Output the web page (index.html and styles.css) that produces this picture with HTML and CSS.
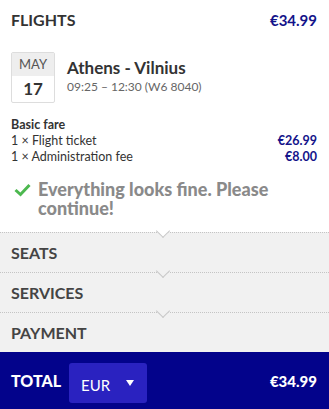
FILE: index.html
```html
<!DOCTYPE html>
<html>
<head>
<meta charset="utf-8">
<link rel="stylesheet" href="styles.css">
</head>
<body>
<div class="page">
  <section class="flights">
    <div class="head">
      <h2 class="title">FLIGHTS</h2>
      <span class="price">€34.99</span>
    </div>
    <div class="trip">
      <div class="date">
        <div class="month">MAY</div>
        <div class="day">17</div>
      </div>
      <div class="route">
        <div class="cities">Athens - Vilnius</div>
        <div class="time">09:25 – 12:30 (W6 8040)</div>
      </div>
    </div>
    <div class="fare">
      <div class="fare-name">Basic fare</div>
      <div class="line"><span>1 × Flight ticket</span><span class="amt">€26.99</span></div>
      <div class="line"><span>1 × Administration fee</span><span class="amt">€8.00</span></div>
    </div>
    <div class="status">
      <svg class="check" width="17" height="14" viewBox="0 0 17 14"><path d="M1.5 7 L6.5 11.5 L15.5 2" fill="none" stroke="#4cb84f" stroke-width="3"/></svg>
      <span>Everything looks fine. Please continue!</span>
    </div>
  </section>
  <div class="row first">SEATS</div>
  <div class="row">SERVICES</div>
  <div class="row">PAYMENT</div>
  <footer class="total">
    <span class="total-label">TOTAL</span>
    <div class="currency"><span>EUR</span><span class="caret"></span></div>
    <span class="total-price">€34.99</span>
  </footer>
</div>
</body>
</html>
```

FILE: styles.css
```css
html, body {
  margin: 0;
  padding: 0;
  background: #fff;
}
body {
  font-family: "Lato", "Open Sans", sans-serif;
  color: #333;
}
.page {
  width: 329px;
  height: 409px;
  display: flex;
  flex-direction: column;
  overflow: hidden;
}
.flights {
  padding: 0 12px 0 11px;
  height: 232px;
  box-sizing: border-box;
}
.head {
  display: flex;
  justify-content: space-between;
  align-items: center;
  height: 39px;
}
.title {
  margin: 0;
  font-size: 16px;
  font-weight: 700;
  color: #333;
}
.price {
  font-size: 15px;
  font-weight: 700;
  color: #13138a;
}
.trip {
  display: flex;
  align-items: center;
  margin-top: 13px;
  gap: 12px;
}
.date {
  width: 44px;
  height: 51px;
  box-sizing: border-box;
  border: 1px solid #ddd;
  border-radius: 2px;
  display: flex;
  flex-direction: column;
  text-align: center;
}
.month {
  background: #eee;
  height: 23px;
  line-height: 23px;
  font-size: 13px;
  color: #555;
}
.day {
  flex: 1;
  line-height: 26px;
  font-size: 17px;
  font-weight: 700;
  color: #333;
}
.route {
  margin-top: -4px;
}
.cities {
  font-size: 17px;
  font-weight: 700;
  color: #333;
  line-height: 22px;
}
.time {
  font-size: 12px;
  color: #666;
  line-height: 16px;
}
.fare {
  margin-top: 14px;
  font-size: 12.5px;
  line-height: 16px;
  color: #333;
}
.fare-name {
  font-weight: 700;
}
.line {
  display: flex;
  justify-content: space-between;
}
.amt {
  color: #13138a;
  font-weight: 700;
}
.status {
  display: flex;
  align-items: flex-start;
  margin-top: 15px;
  gap: 7px;
  padding-left: 3px;
  font-size: 18px;
  font-weight: 900;
  line-height: 19px;
  color: #8a8a8a;
}
.check {
  flex: none;
  margin-top: 3px;
}
.row {
  position: relative;
  height: 39px;
  line-height: 39px;
  padding-left: 11px;
  background: #f1f1f1;
  border-top: 1px dotted #c4c4c4;
  font-size: 16px;
  font-weight: 700;
  color: #444;
}
.row::before {
  content: "";
  position: absolute;
  left: 158px;
  top: -7px;
  width: 9px;
  height: 9px;
  background: #f1f1f1;
  border-right: 1px solid #c8c8c8;
  border-bottom: 1px solid #c8c8c8;
  transform: rotate(45deg);
}
.row.first::before {
  background: #fff;
}
.total {
  flex: 1;
  background: #03038b;
  display: flex;
  align-items: center;
  padding: 0 12px 0 11px;
  color: #fff;
}
.total-label {
  font-size: 16px;
  font-weight: 900;
  width: 58px;
}
.currency {
  width: 78px;
  height: 40px;
  margin-top: 4px;
  box-sizing: border-box;
  background: #2a22c0;
  border-radius: 3px;
  display: flex;
  align-items: center;
  padding-left: 12px;
  font-size: 15px;
}
.currency span:first-child {
  width: 45px;
  margin-top: 4px;
}
.caret {
  width: 0;
  height: 0;
  border-left: 4px solid transparent;
  border-right: 4px solid transparent;
  border-top: 6px solid #fff;
}
.total-price {
  margin-left: auto;
  font-size: 15px;
  font-weight: 900;
}
```
